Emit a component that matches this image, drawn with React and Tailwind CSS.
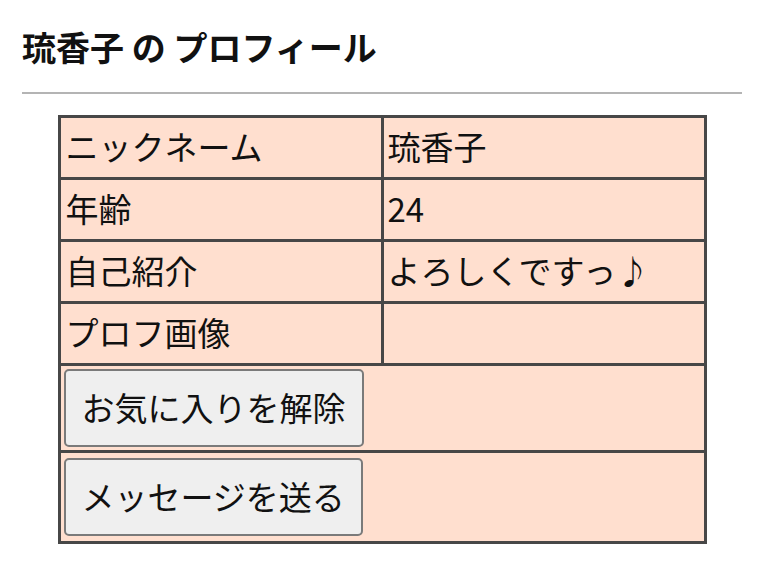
import React from "react";

const rows = [
  { label: "ニックネーム", value: "琉香子" },
  { label: "年齢", value: "24" },
  { label: "自己紹介", value: "よろしくですっ♪" },
  { label: "プロフ画像", value: "" },
];

const App = () => {
  return (
    <div
      className="min-h-screen bg-white px-[22px] pt-[27px] text-[#111]"
      style={{ fontFamily: '"Noto Sans CJK JP", "Noto Sans", sans-serif' }}
    >
      <h1 className="text-[34px] font-bold leading-[40px]">琉香子 の プロフィール</h1>
      <hr className="mt-[25px] border-0 h-[2px] bg-[#b4b4b4]" />

      <table className="mx-auto mt-[21px] w-[649px] table-fixed border-collapse border-[3px] border-[#474747] bg-[#ffdfcf] text-[33px] leading-[40px]">
        <tbody>
          {rows.map((row) => (
            <tr key={row.label}>
              <td className="h-[62px] border-[3px] border-[#474747] px-[5px] pt-0 pb-[4px] align-middle">
                {row.label}
              </td>
              <td className="h-[62px] border-[3px] border-[#474747] px-[4px] pt-0 pb-[4px] align-middle">
                {row.value}
              </td>
            </tr>
          ))}
          <tr>
            <td colSpan={2} className="h-[87px] border-[3px] border-[#474747] px-[3px] py-0 align-middle">
              <button className="h-[78px] rounded-[5px] border-2 border-[#7a7a7a] bg-[#efefef] px-[16px] pb-[3px] text-[33px] leading-[40px] text-[#111]">
                お気に入りを解除
              </button>
            </td>
          </tr>
          <tr>
            <td colSpan={2} className="h-[91px] border-[3px] border-[#474747] px-[3px] py-0 align-middle">
              <button className="h-[78px] rounded-[5px] border-2 border-[#7a7a7a] bg-[#efefef] px-[16px] pb-[3px] text-[33px] leading-[40px] text-[#111]">
                メッセージを送る
              </button>
            </td>
          </tr>
        </tbody>
      </table>
    </div>
  );
};

export default App;
